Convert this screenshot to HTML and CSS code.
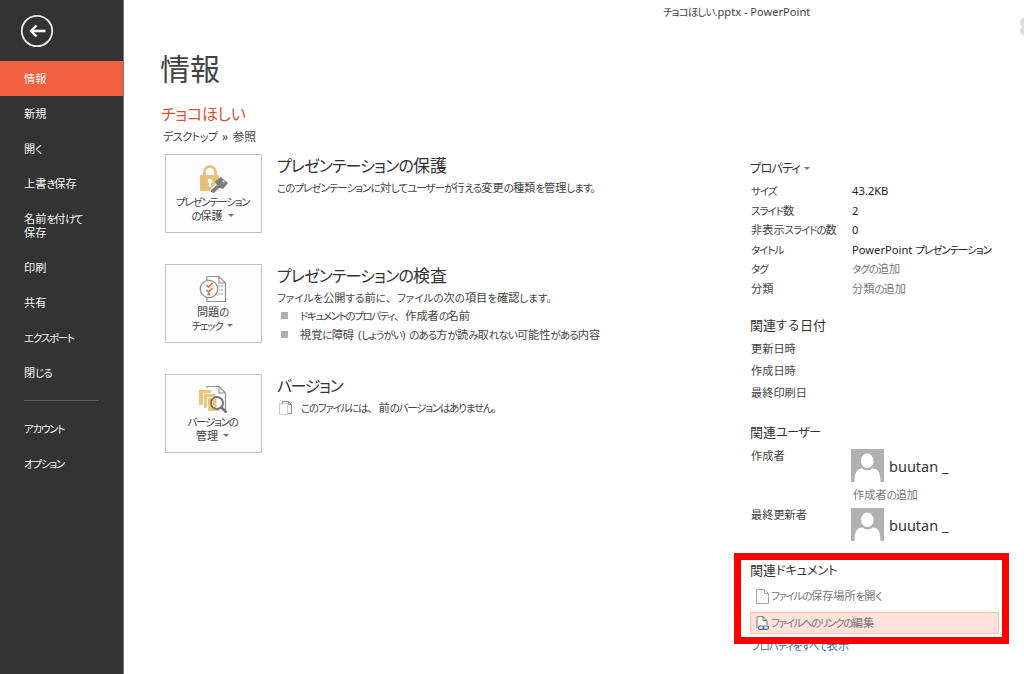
FILE: index.html
```html
<!DOCTYPE html>
<html lang="ja">
<head>
<meta charset="utf-8">
<title>チョコほしい.pptx - PowerPoint</title>
<link rel="stylesheet" href="styles.css">
</head>
<body>
<div class="app">
  <nav class="sidebar">
    <button class="back" aria-label="戻る">
      <svg width="34" height="34" viewBox="0 0 34 34"><circle cx="17" cy="17" r="15.200" fill="none" stroke="#e8e8e8" stroke-width="1.800"/><path d="M25.500 17H11M16.500 11.500L11 17l5.500 5.500" fill="none" stroke="#fff" stroke-width="2.300"/></svg>
    </button>
    <a class="item active">情報</a>
    <a class="item">新規</a>
    <a class="item">開<span class="k">く</span></a>
    <a class="item">上書<span class="k">き</span>保存</a>
    <a class="item two">名前<span class="k">を</span>付<span class="k">けて</span><br>保存</a>
    <a class="item">印刷</a>
    <a class="item">共有</a>
    <a class="item"><span class="k">エクスポート</span></a>
    <a class="item">閉<span class="k">じる</span></a>
    <hr class="rule">
    <a class="item"><span class="k">アカウント</span></a>
    <a class="item"><span class="k">オプション</span></a>
  </nav>

  <main class="main">
    <section class="info">
      <h1>情報</h1>
      <h2 class="file"><span class="k">チョコほしい</span></h2>
      <p class="path"><span class="k">デスクトップ</span> » 参照</p>

      <div class="block">
        <button class="tile">
          <svg width="30" height="30" viewBox="0 0 30 30"><path d="M5.500 12V8a5.500 5.500 0 0 1 11 0v4" fill="none" stroke="#e9c07a" stroke-width="2.800"/><rect x="1" y="11" width="19" height="16" rx="1" fill="#e9c07a"/><circle cx="11" cy="17" r="2.300" fill="#fff"/><path d="M10 17h2v6h-2z" fill="#fff"/><path d="M13 28l8-8.500" stroke="#fdfdfd" stroke-width="6"/><path d="M16 17.500l6-4.500 7 6-5 6-4-1-5 5-3-1v-2l6-5z" fill="#7d7d7d"/><circle cx="24.500" cy="17.500" r="1.100" fill="#fff"/></svg>
          <span class="label"><span class="k">プレゼンテーション</span><br><span class="k">の</span>保護<i class="caret"></i></span>
        </button>
        <div class="desc">
          <h3><span class="k">プレゼンテーションの</span>保護</h3>
          <p class="protect"><span class="k">このプレゼンテーションに</span>対<span class="k">してユーザーが</span>行<span class="k">える</span>変更<span class="k">の</span>種類<span class="k">を</span>管理<span class="k">します。</span></p>
        </div>
      </div>

      <div class="block">
        <button class="tile">
          <svg width="30" height="30" viewBox="0 0 30 30"><path d="M8 6V2.500h12l6.500 6.500v18.500H8V23M20 2.500V9h6.500" fill="none" stroke="#919191" stroke-width="1.200"/><path d="M19 12h5M20 16h4M19 20h5" stroke="#aaa"/><circle cx="10" cy="15" r="8.700" fill="#fdfdfd" stroke="#919191" stroke-width="1.300"/><path d="M7.500 11l2 2 4-4M7.500 16l2 2 4-4" fill="none" stroke="#ec6a49" stroke-width="1.600"/><rect x="8.500" y="19" width="2.500" height="2.500" fill="#999"/></svg>
          <span class="label">問題<span class="k">の</span><br><span class="k">チェック</span><i class="caret"></i></span>
        </button>
        <div class="desc">
          <h3><span class="k">プレゼンテーションの</span>検査</h3>
          <p class="inspect"><span class="k">ファイルを</span>公開<span class="k">する</span>前<span class="k">に</span>、<span class="k">ファイルの</span>次<span class="k">の</span>項目<span class="k">を</span>確認<span class="k">します。</span></p>
          <ul>
            <li class="props-item"><span><span class="k">ドキュメントのプロパティ</span>、作成者<span class="k">の</span>名前</span></li>
            <li class="access-item"><span>視覚<span class="k">に</span>障碍 (<span class="k">しょうがい</span>) <span class="k">のある</span>方<span class="k">が</span>読<span class="k">み</span>取<span class="k">れない</span>可能性<span class="k">がある</span>内容</span></li>
          </ul>
        </div>
      </div>

      <div class="block">
        <button class="tile">
          <svg width="30" height="30" viewBox="0 0 30 30"><path d="M8 4V2.500h12l6.500 6.500v18M20 2.500V9h6.500" fill="none" stroke="#919191" stroke-width="1.200"/><path d="M0 6h12v3H4v12H0zM5 10h11v3H8v11H5zM9 14h11v13H9z" fill="#edc67c"/><path d="M4.500 21V9.500H14M8.500 24V13.500h9" fill="none" stroke="#fff" stroke-width=".8"/><circle cx="18" cy="19" r="6" fill="#fdfdfd" stroke="#777" stroke-width="2"/><path d="M17.500 14.500a4.500 4.500 0 0 0 0 9z" fill="#edc67c"/><path d="M22 23l5.500 5.500" stroke="#777" stroke-width="2.600"/></svg>
          <span class="label"><span class="k">バージョンの</span><br>管理<i class="caret"></i></span>
        </button>
        <div class="desc">
          <h3 class="version"><span class="k">バージョン</span></h3>
          <p class="none"><svg width="16" height="14" viewBox="0 0 16 14"><path d="M4.500 2.500v-2h6l3 3v9h-3M10.500.5v3h3" fill="none" stroke="#888"/><path d="M1.500 2.500h8v11h-8z" fill="none" stroke="#999" stroke-dasharray="1 1"/></svg><span><span class="k">このファイルには</span>、前<span class="k">のバージョンはありません。</span></span></p>
        </div>
      </div>
    </section>

    <aside class="side">
      <p class="doc"><span class="k">チョコほしい</span>.pptx - PowerPoint</p>
      <h4><span class="k">プロパティ</span><i class="caret"></i></h4>
      <dl class="props">
        <dt><span class="k">サイズ</span></dt><dd>43.2KB</dd>
        <dt><span class="k">スライド</span>数</dt><dd>2</dd>
        <dt>非表示<span class="k">スライドの</span>数</dt><dd>0</dd>
        <dt><span class="k">タイトル</span></dt><dd>PowerPoint <span class="k">プレゼンテーション</span></dd>
        <dt><span class="k">タグ</span></dt><dd class="hint"><span class="k">タグの</span>追加</dd>
        <dt>分類</dt><dd class="hint">分類<span class="k">の</span>追加</dd>
      </dl>
      <h4 class="dates-head">関連<span class="k">する</span>日付</h4>
      <ul class="dates"><li>更新日時</li><li>作成日時</li><li>最終印刷日</li></ul>
      <h4 class="users-head">関連<span class="k">ユーザー</span></h4>
      <div class="user"><span class="role">作成者</span>
        <svg width="33" height="33" viewBox="0 0 33 33"><path fill="#b1b1b1" d="M0 0h33v33H0z"/><path d="M3.500 33c0-9 2-13.500 8-13.500 3 2.500 7 2.500 10 0 6 0 8 4.500 8 13.500z" fill="#fff"/><ellipse cx="16.300" cy="11.800" rx="6.300" ry="7.300" fill="#fff"/></svg>
        <span class="name">buutan _</span></div>
      <p class="add hint">作成者<span class="k">の</span>追加</p>
      <div class="user"><span class="role">最終更新者</span>
        <svg width="33" height="33" viewBox="0 0 33 33"><path fill="#b1b1b1" d="M0 0h33v33H0z"/><path d="M3.500 33c0-9 2-13.500 8-13.500 3 2.500 7 2.500 10 0 6 0 8 4.500 8 13.500z" fill="#fff"/><ellipse cx="16.300" cy="11.800" rx="6.300" ry="7.300" fill="#fff"/></svg>
        <span class="name">buutan _</span></div>
      <div class="related">
        <h4 class="docs-head">関連<span class="k">ドキュメント</span></h4>
        <a class="link"><svg width="13" height="15" viewBox="0 0 13 15"><path d="M.5.5h8l4 4v10H.5zM8.500.5v4h4" fill="#fafafa" stroke="#aaa"/></svg><span><span class="k">ファイルの</span>保存場所<span class="k">を</span>開<span class="k">く</span></span></a>
        <a class="link hot"><svg width="13" height="15" viewBox="0 0 13 15"><path d="M1 12V.7h6l4 3.800V9M7 .7v3.800h4" fill="#fff" stroke="#777"/><rect x="2.500" y="10" width="5.500" height="3.400" rx="1.700" fill="none" stroke="#4772a8" stroke-width="1.200"/><rect x="7" y="10" width="5.500" height="3.400" rx="1.700" fill="none" stroke="#4772a8" stroke-width="1.200"/></svg><span><span class="k">ファイルへのリンクの</span>編集</span></a>
      </div>
      <a class="all"><span class="k">プロパティをすべて</span>表示</a>
    </aside>
    <div class="highlight"></div>
    <svg class="corner" width="5" height="20" viewBox="0 0 5 20"><path d="M5 1Q1 1 1 5q0 3 2 4.500Q1 11 1 14q0 4 4 4z" fill="#ddd"/></svg>
  </main>
</div>
</body>
</html>
```
FILE: styles.css
```css
* { box-sizing: border-box; }
body, h1, h2, h3, h4, p, ul, dl, dd { margin: 0; padding: 0; font-weight: 400; }
body {
  background: #fff;
  color: #444;
  font: 11.2px/14px "Noto Sans", "Noto Sans CJK JP", sans-serif;
  overflow: hidden;
}
ul { list-style: none; }
button { border: 0; padding: 0; background: none; font: inherit; color: inherit; }
svg { display: block; flex: none; }

/* proportional, tightly set kana; --kern sets the tightness per text */
.k {
  font-size: 0.94em;
  line-height: 0;
  font-feature-settings: "palt";
  letter-spacing: calc(var(--kern, -0.07em) + 0.055em);
}

.app { display: flex; height: 674px; }

.sidebar {
  --kern: -0.175em;
  width: 124px;
  flex: none;
  background: #333;
  border-right: 1px solid #777;
  color: #f4f4f4;
  display: flex;
  flex-direction: column;
}
.back { height: 61px; padding: 14px 0 13px 20px; }
.item {
  height: 35px;
  padding-left: 24px;
  display: block;
  line-height: 36px;
  white-space: nowrap;
}
.item.active { background: #f1613d; }
.item.two { --kern: -0.24em; height: 49px; padding-top: 11px; line-height: 14px; }
.rule { width: 75px; height: 1px; border: 0; margin: 10px 0 10px 24px; background: #5c5c5c; }

.main { flex: 1; display: flex; position: relative; white-space: nowrap; }

.info { width: 610px; padding: 48px 0 0 37px; flex: none; }
h1 { margin-left: -1px; font-size: 30px; line-height: 42px; color: #444; }
.file { margin-top: 11px; font-size: 17px; line-height: 25px; color: #d75233; }
.path { --kern: -0.1em; margin: 3px 0 0 2px; line-height: 14px; font-size: 11.800px; word-spacing: 1.300px; }
.block { display: flex; height: 110px; margin-left: 4px; gap: 15px; }
.path + .block { margin-top: 11px; }
.tile {
  --kern: -0.178em;
  width: 97px;
  height: 79px;
  border: 1px solid #c2c2c2;
  background: #fdfdfd;
  display: flex;
  flex-direction: column;
  align-items: center;
  padding-top: 9px;
}
.tile .label { line-height: 13.500px; text-align: center; padding: 1px 2px 0 0; }
.caret {
  display: inline-block;
  border: 3px solid transparent;
  border-top-color: #777;
  border-bottom: 0;
  margin: 0 0 3px 5px;
}
h3 { --kern: -0.108em; font-size: 17px; line-height: 24px; color: #333; }
h3.version { --kern: -0.14em; }
.desc p { line-height: 18px; margin-top: 1px; }
.protect { --kern: -0.148em; }
.inspect { --kern: -0.055em; }
.props-item { --kern: -0.187em; }
.access-item { --kern: -0.14em; word-spacing: 1px; }
.desc li { line-height: 18.500px; display: flex; align-items: center; }
.desc li::before { content: ""; width: 7px; height: 7px; background: #b0b0b0; margin: 0 12px 1px 4px; }
.none { --kern: -0.173em; display: flex; align-items: center; gap: 7px; }
.none svg { margin-left: 1px; }

.side { --kern: -0.155em; width: 290px; padding-left: 16px; display: flex; flex-direction: column; }
.doc { --kern: -0.13em; margin: 5px 0 0 -87px; font-size: 11.100px; line-height: 14px; }
h4 { --kern: -0.13em; font-size: 13px; line-height: 20px; color: #333; }
h4 .caret { margin-left: 4px; }
.doc + h4 { margin-top: 139px; }
.props { display: grid; grid-template-columns: 101px 1fr; grid-auto-rows: 19.500px; line-height: 19.500px; margin: 3px 0 0 1px; }
.props dd { color: #222; }
.props .hint, .hint { color: #777; }
.dates-head { --kern: 0.03em; margin-top: 17px; }
.dates { margin: 3px 0 0 1px; line-height: 22px; }
.users-head { --kern: -0.12em; margin-top: 18px; }
.docs-head { --kern: -0.07em; }
.user { display: flex; height: 34px; margin-left: 1px; }
.users-head + .user { margin-top: 7px; }
.role { width: 100px; line-height: 14px; }
.name { font-size: 14.500px; line-height: 34px; margin-left: 5px; color: #333; }
.add { margin-left: 103px; line-height: 24px; height: 25px; }
.related { margin-top: 18px; }
.link { --kern: -0.18em; display: flex; align-items: center; gap: 2px; height: 22px; width: 249px; padding-left: 5px; border: 1px solid transparent; color: #777; }
.related h4 + .link { margin-top: 5px; }
.link + .link { margin-top: 5px; }
.link.hot { --kern: -0.187em; background: #fde1da; border-color: #f4c5a9; }
.all { color: #3c6ca8; margin-top: 5px; margin-left: 1px; }

/* callout frame drawn over the page */
.highlight { position: absolute; left: 610px; top: 553px; width: 275px; height: 91px; border: solid #f00; border-width: 7px; }
.corner { position: absolute; right: 0; top: 17px; }
```
